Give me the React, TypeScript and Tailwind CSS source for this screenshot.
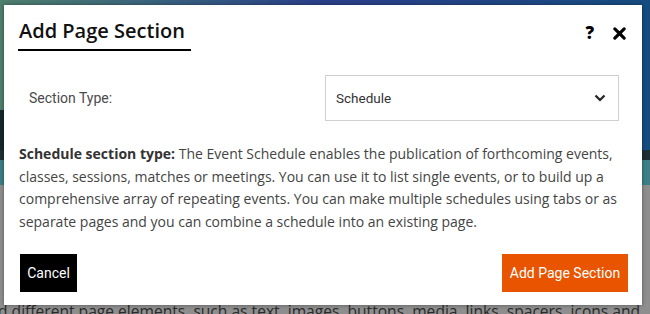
import React from "react";

export default function App() {
  return (
    <div className="relative w-[650px] h-[314px] overflow-hidden bg-[#8e8e8e]" style={{ fontFamily: "'Open Sans', sans-serif" }}>
      {/* background page */}
      <div className="h-[150px] bg-gradient-to-r from-[#4f7f6d] via-[#2a3f8a] to-[#154c80] relative">
        <div className="absolute left-0 top-[110px] w-[10px] h-[40px] bg-[#16262a]" />
      </div>
      <div className="h-[10px] bg-[#1d2f33]" />
      <div className="h-[25px] bg-[#3c7f86]" />
      <div className="h-[120px]" />
      <div className="absolute left-[-2px] top-[302px] whitespace-nowrap text-[15.6px] text-[#2a2a2a] leading-[18px]" style={{ fontFamily: "'Open Sans', sans-serif" }}>
        d different page elements, such as text, images, buttons, media, links, spacers, icons and
      </div>

      {/* modal */}
      <div className="absolute left-[4px] top-[5px] w-[638px] h-[300px] bg-white shadow-[0_0_4px_rgba(0,0,0,0.4)] flex flex-col">
        <div className="flex items-start justify-between pl-[14px] pr-[16px] pt-[14px]">
          <div className="border-b-2 border-black pr-[6px] pb-[6px] pl-[1px]">
            <h1 className="text-[20px] leading-[24px] font-semibold text-[#111]" style={{ fontFamily: "'Open Sans', sans-serif" }}>
              Add Page Section
            </h1>
          </div>
          <div className="flex items-center gap-[19px] pt-[4px]">
            <span className="text-[17px] font-extrabold text-black leading-[20px]" style={{ fontFamily: "'Open Sans', sans-serif" }}>?</span>
            <svg width="13" height="13" viewBox="0 0 14 14">
              <path d="M2 2 L12 12 M12 2 L2 12" stroke="black" strokeWidth="3.4" strokeLinecap="round" />
            </svg>
          </div>
        </div>

        <div className="flex items-center mt-[24px] pl-[25px] pr-[23px]">
          <div className="w-[296px] text-[14px] text-[#4a4a4a]" style={{ fontFamily: "Roboto, sans-serif" }}>Section Type:</div>
          <div className="flex-1 h-[46px] border border-[#cfcfcf] flex items-center justify-between pl-[10px] pr-[12px]">
            <span className="text-[13.5px] text-[#333]" style={{ fontFamily: "Roboto, sans-serif" }}>Schedule</span>
            <svg width="12" height="8" viewBox="0 0 12 8">
              <path d="M1.5 1.5 L6 6 L10.5 1.5" stroke="#222" strokeWidth="2.2" fill="none" />
            </svg>
          </div>
        </div>

        <p className="mt-[22px] pl-[15px] pr-[22px] text-[14px] leading-[22.5px] text-[#444]" style={{ fontFamily: "'Open Sans', sans-serif" }}>
          <span className="font-bold text-[#333]">Schedule section type:</span> The Event Schedule enables the publication of forthcoming events, classes, sessions, matches or meetings. You can use it to list single events, or to build up a comprehensive array of repeating events. You can make multiple schedules using tabs or as separate pages and you can combine a schedule into an existing page.
        </p>

        <div className="flex justify-between mt-auto mb-[13px] pl-[16px] pr-[14px]">
          <button className="h-[38px] w-[57px] bg-black text-white text-[14px]" style={{ fontFamily: "Roboto, sans-serif" }}>Cancel</button>
          <button className="h-[38px] w-[126px] bg-[#e85400] text-white text-[14px]" style={{ fontFamily: "Roboto, sans-serif" }}>Add Page Section</button>
        </div>
      </div>
    </div>
  );
}
